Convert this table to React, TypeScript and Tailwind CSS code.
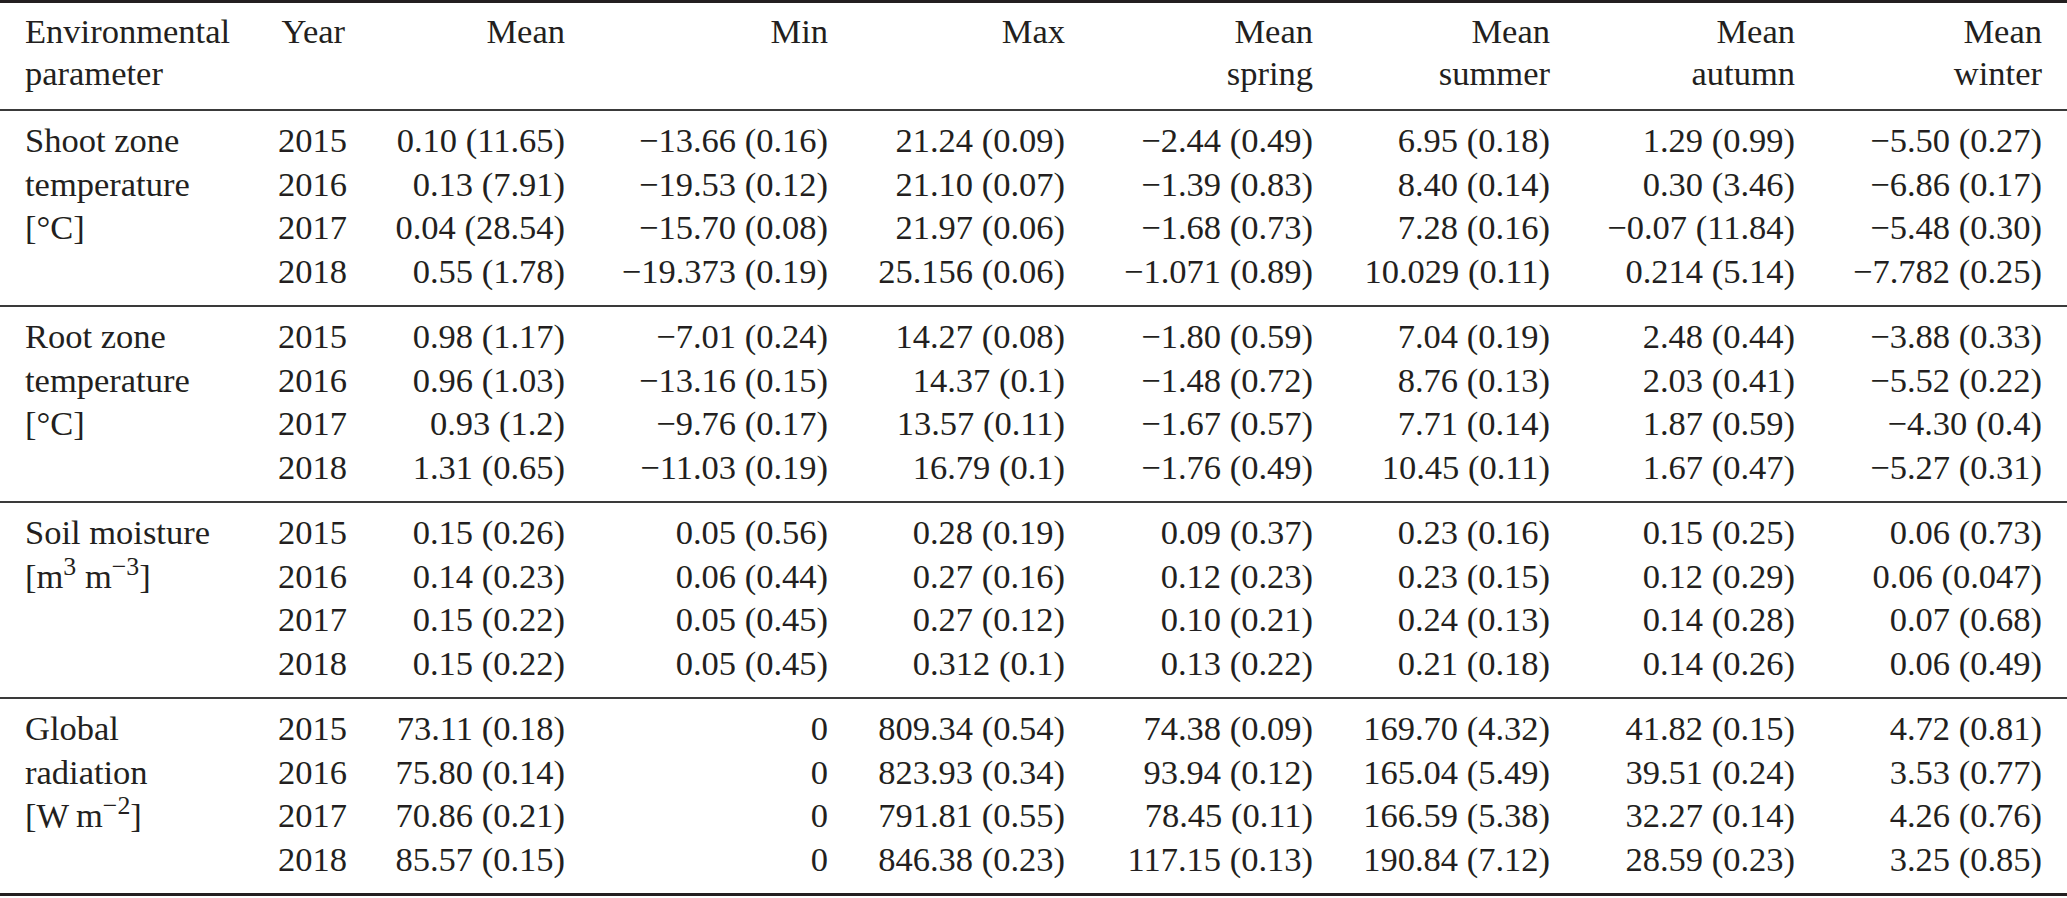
import * as React from "react";

type Section = {
  label: React.ReactNode[];
  rows: { year: string; values: string[] }[];
};

const headers: [string, string][] = [
  ["Mean", ""],
  ["Min", ""],
  ["Max", ""],
  ["Mean", "spring"],
  ["Mean", "summer"],
  ["Mean", "autumn"],
  ["Mean", "winter"],
];

const sections: Section[] = [
  {
    label: ["Shoot zone", "temperature", "[°C]", ""],
    rows: [
      { year: "2015", values: ["0.10 (11.65)", "−13.66 (0.16)", "21.24 (0.09)", "−2.44 (0.49)", "6.95 (0.18)", "1.29 (0.99)", "−5.50 (0.27)"] },
      { year: "2016", values: ["0.13 (7.91)", "−19.53 (0.12)", "21.10 (0.07)", "−1.39 (0.83)", "8.40 (0.14)", "0.30 (3.46)", "−6.86 (0.17)"] },
      { year: "2017", values: ["0.04 (28.54)", "−15.70 (0.08)", "21.97 (0.06)", "−1.68 (0.73)", "7.28 (0.16)", "−0.07 (11.84)", "−5.48 (0.30)"] },
      { year: "2018", values: ["0.55 (1.78)", "−19.373 (0.19)", "25.156 (0.06)", "−1.071 (0.89)", "10.029 (0.11)", "0.214 (5.14)", "−7.782 (0.25)"] },
    ],
  },
  {
    label: ["Root zone", "temperature", "[°C]", ""],
    rows: [
      { year: "2015", values: ["0.98 (1.17)", "−7.01 (0.24)", "14.27 (0.08)", "−1.80 (0.59)", "7.04 (0.19)", "2.48 (0.44)", "−3.88 (0.33)"] },
      { year: "2016", values: ["0.96 (1.03)", "−13.16 (0.15)", "14.37 (0.1)", "−1.48 (0.72)", "8.76 (0.13)", "2.03 (0.41)", "−5.52 (0.22)"] },
      { year: "2017", values: ["0.93 (1.2)", "−9.76 (0.17)", "13.57 (0.11)", "−1.67 (0.57)", "7.71 (0.14)", "1.87 (0.59)", "−4.30 (0.4)"] },
      { year: "2018", values: ["1.31 (0.65)", "−11.03 (0.19)", "16.79 (0.1)", "−1.76 (0.49)", "10.45 (0.11)", "1.67 (0.47)", "−5.27 (0.31)"] },
    ],
  },
  {
    label: [
      "Soil moisture",
      <>
        [m<sup>3</sup> m<sup>−3</sup>]
      </>,
      "",
      "",
    ],
    rows: [
      { year: "2015", values: ["0.15 (0.26)", "0.05 (0.56)", "0.28 (0.19)", "0.09 (0.37)", "0.23 (0.16)", "0.15 (0.25)", "0.06 (0.73)"] },
      { year: "2016", values: ["0.14 (0.23)", "0.06 (0.44)", "0.27 (0.16)", "0.12 (0.23)", "0.23 (0.15)", "0.12 (0.29)", "0.06 (0.047)"] },
      { year: "2017", values: ["0.15 (0.22)", "0.05 (0.45)", "0.27 (0.12)", "0.10 (0.21)", "0.24 (0.13)", "0.14 (0.28)", "0.07 (0.68)"] },
      { year: "2018", values: ["0.15 (0.22)", "0.05 (0.45)", "0.312 (0.1)", "0.13 (0.22)", "0.21 (0.18)", "0.14 (0.26)", "0.06 (0.49)"] },
    ],
  },
  {
    label: [
      "Global",
      "radiation",
      <>
        [W{"\u2009"}m<sup>−2</sup>]
      </>,
      "",
    ],
    rows: [
      { year: "2015", values: ["73.11 (0.18)", "0", "809.34 (0.54)", "74.38 (0.09)", "169.70 (4.32)", "41.82 (0.15)", "4.72 (0.81)"] },
      { year: "2016", values: ["75.80 (0.14)", "0", "823.93 (0.34)", "93.94 (0.12)", "165.04 (5.49)", "39.51 (0.24)", "3.53 (0.77)"] },
      { year: "2017", values: ["70.86 (0.21)", "0", "791.81 (0.55)", "78.45 (0.11)", "166.59 (5.38)", "32.27 (0.14)", "4.26 (0.76)"] },
      { year: "2018", values: ["85.57 (0.15)", "0", "846.38 (0.23)", "117.15 (0.13)", "190.84 (7.12)", "28.59 (0.23)", "3.25 (0.85)"] },
    ],
  },
];

const cols =
  "grid grid-cols-[253px_67px_220px_263px_237px_248px_237px_245px_247px] px-[25px]";

export default function App() {
  return (
    <div className="min-h-screen w-[2067px] bg-white font-['Liberation_Serif',serif] text-[34.5px] text-[#231f20]">
      <div className="h-[3px] bg-[#231f20]" />

      {/* header */}
      <div className={`${cols} pt-[7px] pb-[15px] leading-[42px]`}>
        <div className="flex flex-col">
          <span>Environmental</span>
          <span>parameter</span>
        </div>
        <div className="text-right">Year</div>
        {headers.map(([a, b], i) => (
          <div key={i} className="flex flex-col text-right">
            <span>{a}</span>
            <span>{b || "\u00a0"}</span>
          </div>
        ))}
      </div>

      {sections.map((section, s) => (
        <div key={s}>
          <div className="h-[2px] bg-[#3a3a3a]" />
          <div className="pt-[8px] pb-[12px] leading-[43.5px]">
            {section.rows.map((row, r) => (
              <div key={row.year} className={cols}>
                <div className="whitespace-nowrap">{section.label[r] || "\u00a0"}</div>
                <div className="text-right">{row.year}</div>
                {row.values.map((v, c) => (
                  <div key={c} className="whitespace-nowrap text-right">
                    {v}
                  </div>
                ))}
              </div>
            ))}
          </div>
        </div>
      ))}

      <div className="h-[3px] bg-[#231f20]" />
    </div>
  );
}
